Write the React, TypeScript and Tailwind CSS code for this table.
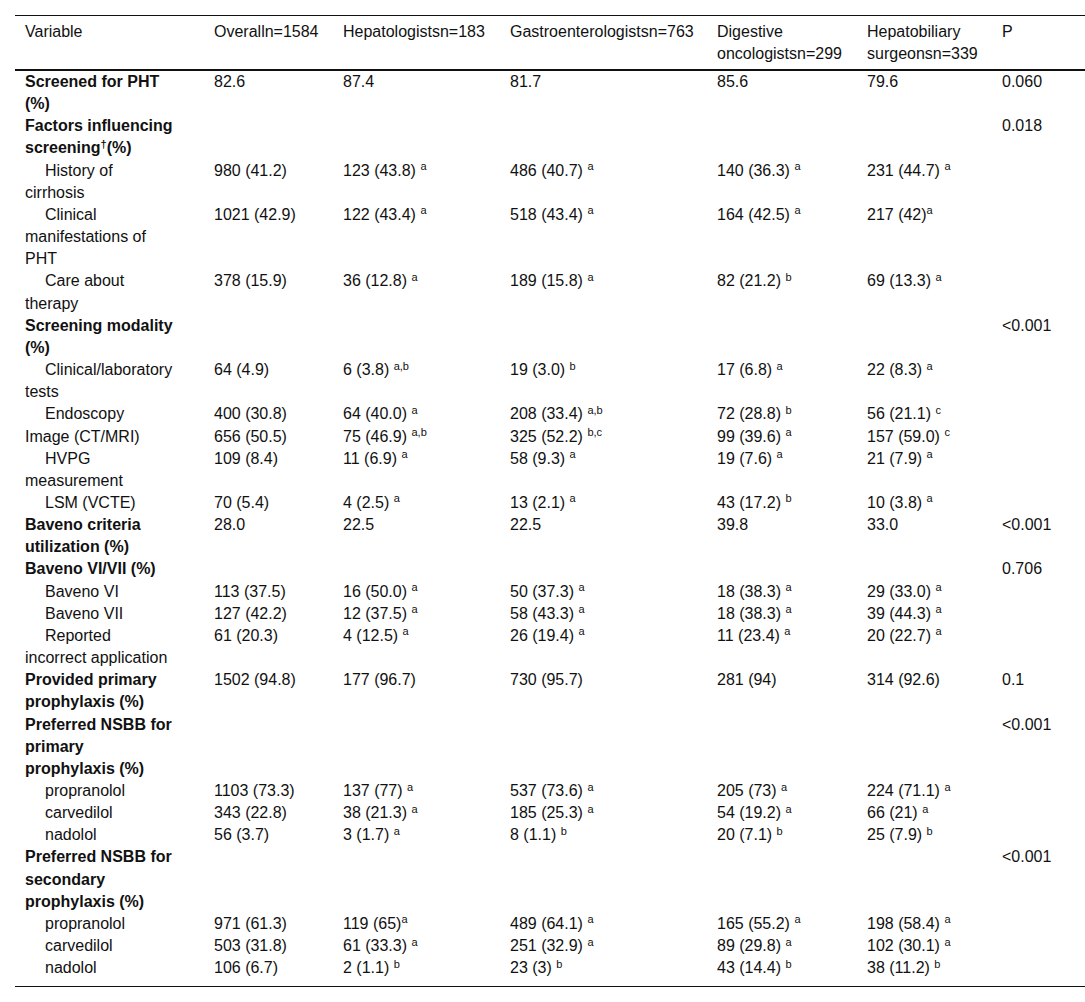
import React from "react";

type Row = {
  lines: string[];
  bold?: boolean;
  indent?: boolean;
  cells?: string[];
};

const headers: string[][] = [
  ["Variable"],
  ["Overalln=1584"],
  ["Hepatologistsn=183"],
  ["Gastroenterologistsn=763"],
  ["Digestive", "oncologistsn=299"],
  ["Hepatobiliary", "surgeonsn=339"],
  ["P"],
];

const rows: Row[] = [
  { lines: ["Screened for PHT", "(%)"], bold: true, cells: ["82.6", "87.4", "81.7", "85.6", "79.6", "0.060"] },
  { lines: ["Factors influencing", "screening{†}(%)"], bold: true, cells: ["", "", "", "", "", "0.018"] },
  { lines: ["History of", "cirrhosis"], indent: true, cells: ["980 (41.2)", "123 (43.8) {a}", "486 (40.7) {a}", "140 (36.3) {a}", "231 (44.7) {a}", ""] },
  { lines: ["Clinical", "manifestations of", "PHT"], indent: true, cells: ["1021 (42.9)", "122 (43.4) {a}", "518 (43.4) {a}", "164 (42.5) {a}", "217 (42){a}", ""] },
  { lines: ["Care about", "therapy"], indent: true, cells: ["378 (15.9)", "36 (12.8) {a}", "189 (15.8) {a}", "82 (21.2) {b}", "69 (13.3) {a}", ""] },
  { lines: ["Screening modality", "(%)"], bold: true, cells: ["", "", "", "", "", "<0.001"] },
  { lines: ["Clinical/laboratory", "tests"], indent: true, cells: ["64 (4.9)", "6 (3.8) {a,b}", "19 (3.0) {b}", "17 (6.8) {a}", "22 (8.3) {a}", ""] },
  { lines: ["Endoscopy"], indent: true, cells: ["400 (30.8)", "64 (40.0) {a}", "208 (33.4) {a,b}", "72 (28.8) {b}", "56 (21.1) {c}", ""] },
  { lines: ["Image (CT/MRI)"], cells: ["656 (50.5)", "75 (46.9) {a,b}", "325 (52.2) {b,c}", "99 (39.6) {a}", "157 (59.0) {c}", ""] },
  { lines: ["HVPG", "measurement"], indent: true, cells: ["109 (8.4)", "11 (6.9) {a}", "58 (9.3) {a}", "19 (7.6) {a}", "21 (7.9) {a}", ""] },
  { lines: ["LSM (VCTE)"], indent: true, cells: ["70 (5.4)", "4 (2.5) {a}", "13 (2.1) {a}", "43 (17.2) {b}", "10 (3.8) {a}", ""] },
  { lines: ["Baveno criteria", "utilization (%)"], bold: true, cells: ["28.0", "22.5", "22.5", "39.8", "33.0", "<0.001"] },
  { lines: ["Baveno VI/VII (%)"], bold: true, cells: ["", "", "", "", "", "0.706"] },
  { lines: ["Baveno VI"], indent: true, cells: ["113 (37.5)", "16 (50.0) {a}", "50 (37.3) {a}", "18 (38.3) {a}", "29 (33.0) {a}", ""] },
  { lines: ["Baveno VII"], indent: true, cells: ["127 (42.2)", "12 (37.5) {a}", "58 (43.3) {a}", "18 (38.3) {a}", "39 (44.3) {a}", ""] },
  { lines: ["Reported", "incorrect application"], indent: true, cells: ["61 (20.3)", "4 (12.5) {a}", "26 (19.4) {a}", "11 (23.4) {a}", "20 (22.7) {a}", ""] },
  { lines: ["Provided primary", "prophylaxis (%)"], bold: true, cells: ["1502 (94.8)", "177 (96.7)", "730 (95.7)", "281 (94)", "314 (92.6)", "0.1"] },
  { lines: ["Preferred NSBB for", "primary", "prophylaxis (%)"], bold: true, cells: ["", "", "", "", "", "<0.001"] },
  { lines: ["propranolol"], indent: true, cells: ["1103 (73.3)", "137 (77) {a}", "537 (73.6) {a}", "205 (73) {a}", "224 (71.1) {a}", ""] },
  { lines: ["carvedilol"], indent: true, cells: ["343 (22.8)", "38 (21.3) {a}", "185 (25.3) {a}", "54 (19.2) {a}", "66 (21) {a}", ""] },
  { lines: ["nadolol"], indent: true, cells: ["56 (3.7)", "3 (1.7) {a}", "8 (1.1) {b}", "20 (7.1) {b}", "25 (7.9) {b}", ""] },
  { lines: ["Preferred NSBB for", "secondary", "prophylaxis (%)"], bold: true, cells: ["", "", "", "", "", "<0.001"] },
  { lines: ["propranolol"], indent: true, cells: ["971 (61.3)", "119 (65){a}", "489 (64.1) {a}", "165 (55.2) {a}", "198 (58.4) {a}", ""] },
  { lines: ["carvedilol"], indent: true, cells: ["503 (31.8)", "61 (33.3) {a}", "251 (32.9) {a}", "89 (29.8) {a}", "102 (30.1) {a}", ""] },
  { lines: ["nadolol"], indent: true, cells: ["106 (6.7)", "2 (1.1) {b}", "23 (3) {b}", "43 (14.4) {b}", "38 (11.2) {b}", ""] },
];

// "text {sup}" -> text with superscript
const Rich = ({ value }: { value: string }) => {
  const parts = value.split(/\{([^}]*)\}/);
  return (
    <>
      {parts.map((part, i) =>
        i % 2 === 1 ? (
          <sup key={i} className="text-[11px]">
            {part}
          </sup>
        ) : (
          <React.Fragment key={i}>{part}</React.Fragment>
        )
      )}
    </>
  );
};

export default function App() {
  return (
    <div className="bg-white pt-[15px] pl-[15px] pb-[10px] font-['Liberation_Sans',Arial,sans-serif] text-[16px] leading-[22px] text-[#111]">
      <table className="w-[1070px] table-fixed border-t border-b border-[#111]">
        <colgroup>
          <col className="w-[189px]" />
          <col className="w-[129px]" />
          <col className="w-[167px]" />
          <col className="w-[207px]" />
          <col className="w-[150px]" />
          <col className="w-[135px]" />
          <col className="w-[93px]" />
        </colgroup>
        <thead>
          <tr className="border-b-2 border-[#111]">
            {headers.map((h, i) => (
              <th key={i} className="px-[10px] pt-[5px] pb-[4px] text-left align-top font-normal">
                {h.map((line, j) => (
                  <div key={j} className="whitespace-nowrap">
                    {line}
                  </div>
                ))}
              </th>
            ))}
          </tr>
        </thead>
        <tbody className="leading-[22.15px]">
          {rows.map((row, r) => (
            <tr key={r}>
              <td className="px-[10px] align-top">
                {row.lines.map((line, j) => (
                  <div
                    key={j}
                    className={`whitespace-nowrap ${row.bold ? "font-bold" : ""} ${row.indent && j === 0 ? "pl-[20px]" : ""}`}
                  >
                    <Rich value={line} />
                  </div>
                ))}
              </td>
              {(row.cells ?? []).map((c, k) => (
                <td key={k} className="px-[10px] align-top whitespace-nowrap">
                  <Rich value={c} />
                </td>
              ))}
            </tr>
          ))}
          <tr>
            <td colSpan={7} className="h-[7px] p-0" />
          </tr>
        </tbody>
      </table>
    </div>
  );
}
